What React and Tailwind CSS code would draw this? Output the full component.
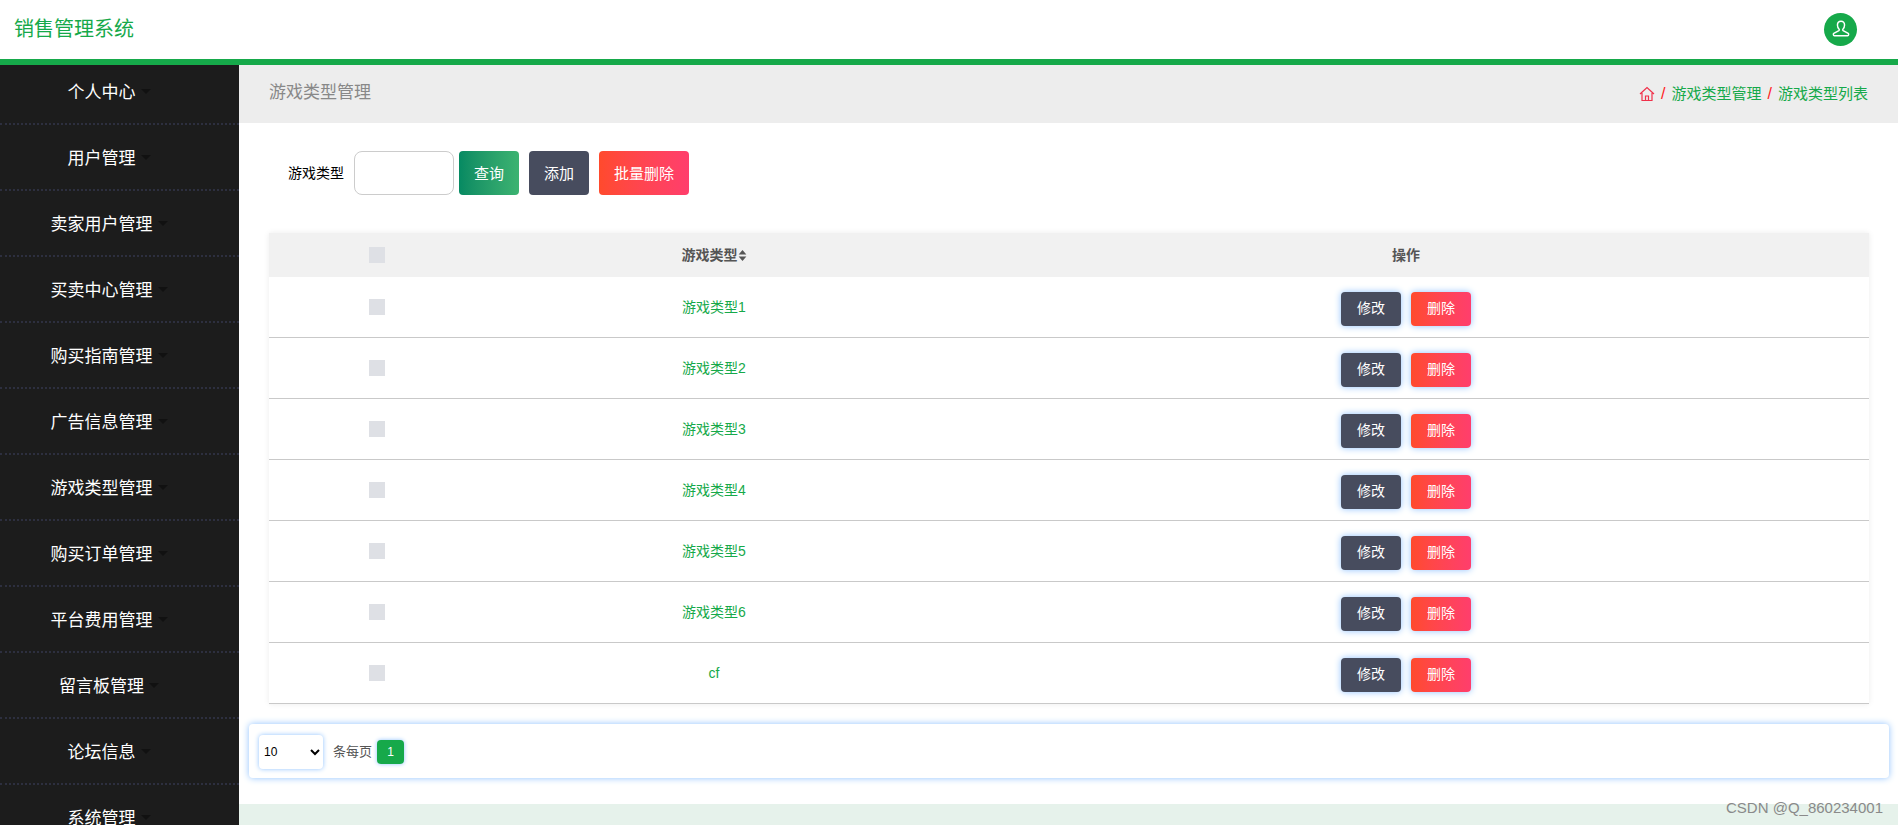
const menus = ["个人中心", "用户管理", "卖家用户管理", "买卖中心管理", "购买指南管理", "广告信息管理", "游戏类型管理", "购买订单管理", "平台费用管理", "留言板管理", "论坛信息", "系统管理"];
const rows = ["游戏类型1", "游戏类型2", "游戏类型3", "游戏类型4", "游戏类型5", "游戏类型6", "cf"];

function Sidebar() {
  return (
    <aside className="w-[239px] shrink-0 bg-[#1c1c1c] overflow-hidden">
      <ul className="-mt-[6px]">
        {menus.map((m) => (
          <li key={m} className="h-[66px] flex items-center justify-center pr-[21px] pt-[3px] border-b-2 border-dotted border-[#2d2f3f] text-white text-[17px]">
            <span>{m}</span>
            <span className="ml-[5px] w-0 h-0 border-x-[5px] border-x-transparent border-t-[5px] border-t-[#111111] -mt-[2px]" />
          </li>
        ))}
      </ul>
    </aside>
  );
}

function Row({ name }) {
  return (
    <div className="h-[61px] flex items-center border-b border-[#c9c9c9] bg-white">
      <div className="w-[216px] flex justify-center">
        <div className="w-4 h-4 bg-[#dee0e5]" />
      </div>
      <div className="w-[458px] text-center text-[14px] text-[#16a94a]">{name}</div>
      <div className="flex-1 flex justify-center gap-[10px] pt-[3px]">
        <button className="w-[60px] h-[34px] rounded-[4px] bg-[#474c5e] text-white text-[14px] shadow-[0_0_7px_#8fc2ff]">修改</button>
        <button className="w-[60px] h-[34px] rounded-[4px] bg-gradient-to-r from-[#ff4a2c] to-[#ff3e6c] text-white text-[14px] shadow-[0_0_7px_#8fc2ff]">删除</button>
      </div>
    </div>
  );
}

export default function App() {
  return (
    <div className="relative h-screen overflow-hidden flex flex-col bg-white font-['Liberation_Sans','Noto_Sans_CJK_SC',sans-serif]">
      <header className="h-[65px] shrink-0 flex items-center justify-between border-b-[6px] border-[#16a94a] bg-white pl-[14px] pr-[41px]">
        <div className="text-[20px] text-[#16a94a] -mt-[1px]">销售管理系统</div>
        <div className="w-[33px] h-[33px] rounded-full bg-[#16a94a] flex items-center justify-center -mt-[1px]">
          <svg width="20" height="20" viewBox="0 0 18 18" fill="none" stroke="white" strokeWidth="1.300">
            <path d="M9 2c-2 0-3.200 1.500-3.200 3.400 0 1.600.7 3 1.500 3.800.3.400.2 1-.2 1.300L2.500 13c-.6.400-.6 2 .5 2h12c1.100 0 1.100-1.600.5-2l-4.600-2.500c-.4-.3-.5-.9-.2-1.300.8-.8 1.500-2.200 1.500-3.800C12.200 3.500 11 2 9 2z" />
          </svg>
        </div>
      </header>
      <div className="flex-1 flex min-h-0">
        <Sidebar />
        <main className="flex-1 flex flex-col min-w-0">
          <div className="h-[58px] shrink-0 bg-[#ededed] flex items-center justify-between px-[30px]">
            <div className="text-[17px] text-[#888888] -mt-[2px]">游戏类型管理</div>
            <div className="flex items-center text-[15px] text-[#16a94a]">
              <svg width="16" height="16" viewBox="0 0 16 16" fill="none" stroke="#f0304a" strokeWidth="1.200">
                <path d="M1 8l7-6.500L15 8M3 7v7.500h10V7M6.500 14.500V10h3v4.500" />
              </svg>
              <span className="mx-[6px] text-[16px] text-[#ff2020]">/</span>
              <span>游戏类型管理</span>
              <span className="mx-[6px] text-[16px] text-[#ff2020]">/</span>
              <span>游戏类型列表</span>
            </div>
          </div>
          <div className="flex items-center h-[44px] mt-[28px] pl-[49px] shrink-0">
            <label className="w-[56px] text-[14px] text-black">游戏类型</label>
            <input className="ml-[10px] w-[100px] h-[44px] rounded-[8px] border border-[#cccccc] bg-white" />
            <button className="ml-[5px] w-[60px] h-[44px] rounded-[4px] pt-[2px] bg-gradient-to-r from-[#058a62] to-[#3cb371] text-white text-[15px]">查询</button>
            <button className="ml-[10px] w-[60px] h-[44px] rounded-[4px] pt-[2px] bg-[#474c5e] text-white text-[15px]">添加</button>
            <button className="ml-[10px] w-[90px] h-[44px] rounded-[4px] pt-[2px] bg-gradient-to-r from-[#ff4a2c] to-[#ff3e6c] text-white text-[15px]">批量删除</button>
          </div>
          <div className="mt-[38px] ml-[30px] w-[1600px] shrink-0 shadow-[0_0_6px_rgba(0,0,0,0.08)]">
            <div className="h-[44px] flex items-center bg-[#f1f1f1] text-[14px] font-bold text-[#555555]">
              <div className="w-[216px] flex justify-center">
                <div className="w-4 h-4 bg-[#dee0e5]" />
              </div>
              <div className="w-[458px] flex items-center justify-center">
                游戏类型
                <svg width="9" height="11" viewBox="0 0 8 10" fill="#555555">
                  <path d="M4 0l3.500 4H.5zM4 10L.5 6h7z" />
                </svg>
              </div>
              <div className="flex-1 text-center">操作</div>
            </div>
            {rows.map((r) => (
              <Row key={r} name={r} />
            ))}
          </div>
          <div className="mt-[20px] ml-[10px] w-[1640px] h-[54px] shrink-0 rounded-[4px] bg-white shadow-[0_0_7px_#8fc2ff] flex items-center pl-[10px] pt-[1px]">
            <select className="w-[64px] h-[34px] rounded-[4px] bg-white text-[12px] text-black pl-[1px] shadow-[0_0_5px_#8fc2ff]">
              <option>10</option>
            </select>
            <span className="ml-[10px] text-[13px] text-[#555555]">条每页</span>
            <span className="ml-[5px] w-[27px] h-[24px] rounded-[4px] bg-[#16a94a] text-white text-[12px] flex items-center justify-center shadow-[0_0_4px_#8fc2ff]">1</span>
          </div>
          <div className="mt-auto h-[21px] shrink-0 bg-[#e6f2eb]" />
        </main>
      </div>
      <div className="absolute right-[15px] bottom-[6px] text-[15px] text-[#8a8a8a] font-['Liberation_Sans',sans-serif]">CSDN @Q_860234001</div>
    </div>
  );
}
